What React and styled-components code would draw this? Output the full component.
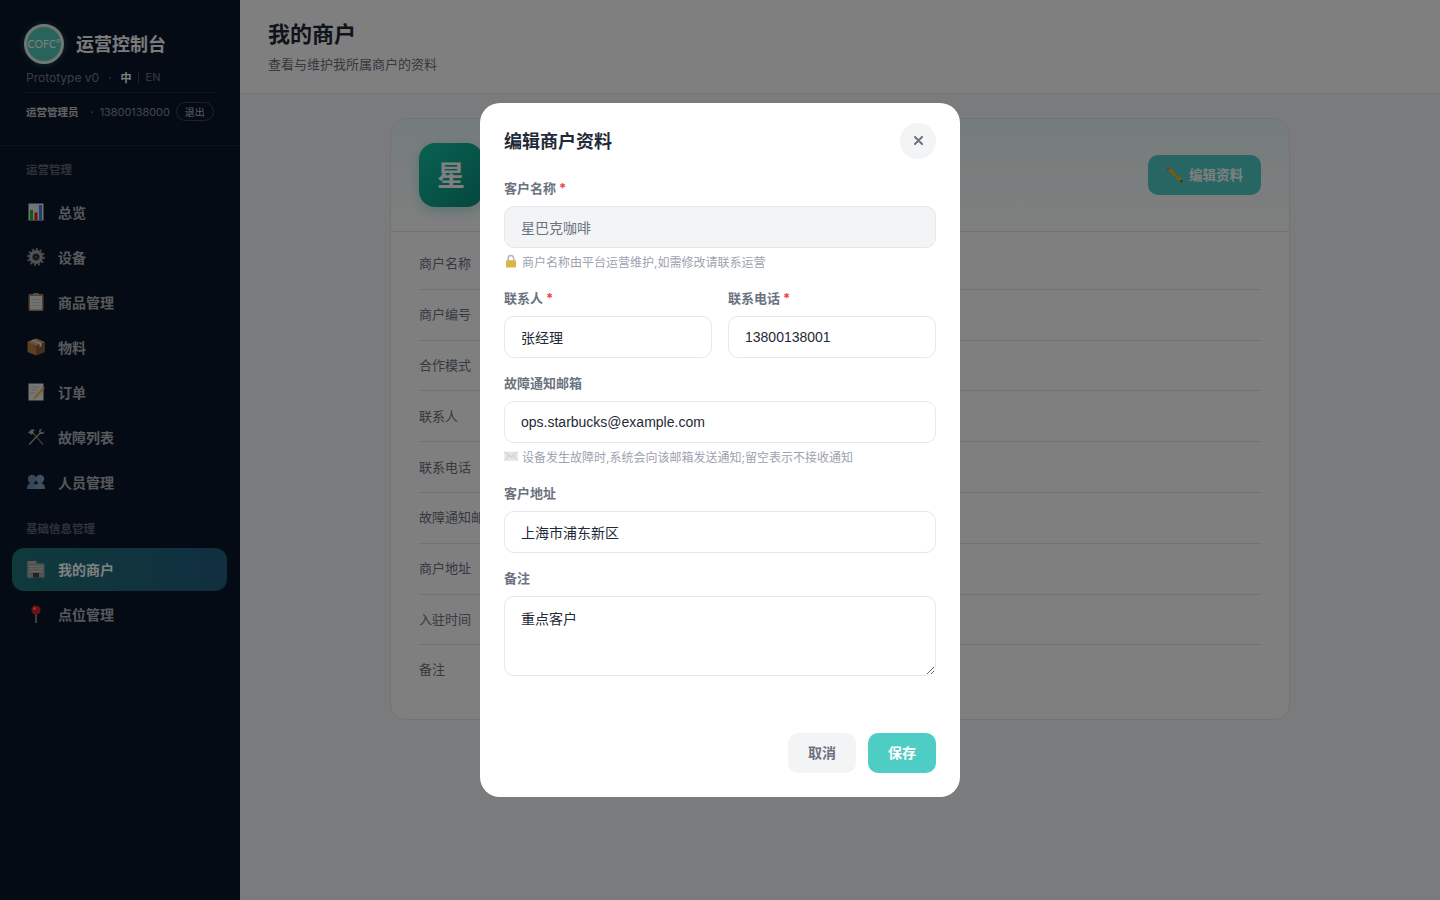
import React from "react";
import styled, { createGlobalStyle } from "styled-components";

const GlobalStyle = createGlobalStyle`
  html, body { margin: 0; padding: 0; height: 100%; }
  body {
    font-family: "Inter", "Noto Sans CJK SC", sans-serif;
    background: #f5f6f8;
    color: #1f2937;
    overflow: hidden;
  }
  * { box-sizing: border-box; }
`;

const Layout = styled.div`
  display: flex;
  width: 100%;
  height: 100vh;
`;

const Sidebar = styled.aside`
  width: 240px;
  flex-shrink: 0;
  background: #0a1628;
  display: flex;
  flex-direction: column;
`;

const Brand = styled.div`
  padding: 24px 24px 0;
  height: 146px;
  border-bottom: 1px solid rgba(255, 255, 255, 0.06);
`;

const BrandRow = styled.div`
  display: flex;
  align-items: center;
  gap: 12px;
  height: 40px;
`;

const LogoBadge = styled.div`
  width: 40px;
  height: 40px;
  border-radius: 50%;
  background: #52c8b8;
  border: 3px solid #e2ecea;
  box-shadow: 0 0 6px rgba(78, 205, 196, 0.35);
  color: #fff;
  font-family: "Lato", sans-serif;
  font-size: 10.5px;
  letter-spacing: 0.1px;
  display: flex;
  align-items: center;
  justify-content: center;
`;

const BrandName = styled.div`
  font-size: 18px;
  font-weight: 700;
  color: #f3f4f6;
  padding-bottom: 2px;
`;

const MetaRow = styled.div`
  display: flex;
  align-items: center;
  height: 20px;
  margin: 3px 0 0 2px;
  font-size: 12px;
  color: rgba(255, 255, 255, 0.45);
`;

const Dot = styled.span`
  margin: 0 9px;
`;

const Lang = styled.span`
  font-size: 11px;
  color: ${(p) => (p.$active ? "#fff" : "rgba(255,255,255,0.4)")};
  font-weight: ${(p) => (p.$active ? 700 : 400)};
`;

const LangBar = styled.span`
  width: 1px;
  height: 11px;
  background: rgba(255, 255, 255, 0.2);
  margin: 0 7px 0 6px;
`;

const UserRow = styled.div`
  display: flex;
  align-items: center;
  margin: 5px 2px 0 2px;
  padding-top: 10px;
  font-size: 10.9px;
  white-space: nowrap;
  color: rgba(255, 255, 255, 0.5);
  position: relative;
  &::before {
    content: "";
    position: absolute;
    left: -2px;
    right: -1px;
    top: 0;
    height: 1px;
    background: rgba(255, 255, 255, 0.08);
  }
`;

const UserName = styled.span`
  color: rgba(255, 255, 255, 0.75);
  font-weight: 600;
  font-size: 10.5px;
  margin-right: 12px;
  padding-bottom: 1px;
`;

const UserDot = styled.span`
  margin-right: 6px;
`;

const LogoutBtn = styled.button`
  margin-left: 6px;
  height: 19px;
  width: 38px;
  flex-shrink: 0;
  padding: 0;
  border: 1px solid rgba(255, 255, 255, 0.2);
  border-radius: 10px;
  background: transparent;
  color: rgba(255, 255, 255, 0.7);
  font-family: inherit;
  font-size: 10px;
`;

const SectionLabel = styled.div`
  font-size: 11.5px;
  font-weight: 600;
  color: rgba(255, 255, 255, 0.35);
  padding-left: 26px;
  height: 16px;
  line-height: 16px;
  margin: ${(p) => p.$margin};
`;

const NavList = styled.nav`
  display: flex;
  flex-direction: column;
  gap: 2px;
  margin: 0 13px 0 12px;
`;

const NavItem = styled.div`
  display: flex;
  align-items: center;
  gap: 13px;
  height: 43px;
  padding: 0 0 1px 15px;
  border-radius: 12px;
  font-size: 14px;
  font-weight: 600;
  color: ${(p) => (p.$active ? "#fff" : "rgba(255,255,255,0.68)")};
  background: ${(p) =>
    p.$active ? "linear-gradient(90deg, #1f7478, #215e80)" : "transparent"};
`;

const Main = styled.main`
  flex: 1;
  display: flex;
  flex-direction: column;
`;

const PageHeader = styled.header`
  height: 94px;
  padding: 20px 28px 0;
  background: #fff;
  border-bottom: 1px solid #e5e7eb;
`;

const PageTitle = styled.h1`
  margin: 0;
  font-size: 22px;
  line-height: 28px;
  font-weight: 700;
  color: #1f2937;
`;

const PageSub = styled.p`
  margin: 7px 0 0;
  font-size: 13px;
  line-height: 18px;
  color: #6b7280;
`;

const Content = styled.div`
  padding: 24px 0;
  display: flex;
  justify-content: center;
`;

const Card = styled.section`
  width: 900px;
  height: 602px;
  background: #fff;
  border: 1px solid #e5e7eb;
  border-radius: 16px;
  overflow: hidden;
`;

const CardHead = styled.div`
  height: 113px;
  padding: 24px 28px;
  display: flex;
  align-items: flex-start;
  justify-content: space-between;
  border-bottom: 1px solid #e5e7eb;
  background: linear-gradient(180deg, rgba(78, 205, 196, 0.12), #fff);
`;

const Avatar = styled.div`
  width: 64px;
  height: 64px;
  border-radius: 16px;
  background: linear-gradient(135deg, #14c4a6, #0a8c7a);
  box-shadow: 0 4px 12px rgba(16, 176, 154, 0.3);
  color: #fff;
  font-size: 28px;
  font-weight: 700;
  padding-bottom: 2px;
  display: flex;
  align-items: center;
  justify-content: center;
`;

const EditBtn = styled.button`
  margin-top: 12px;
  width: 113px;
  height: 40px;
  border: 0;
  border-radius: 10px;
  padding: 0 1px 3px 0;
  background: #4ecdc4;
  color: #fff;
  font-family: inherit;
  font-size: 13.5px;
  font-weight: 600;
  display: flex;
  align-items: center;
  justify-content: center;
  gap: 6px;
`;

const InfoList = styled.div`
  padding: 7px 28px 0;
`;

const InfoRow = styled.div`
  height: 50.8px;
  padding-bottom: ${(p) => (p.$last ? "4px" : "2px")};
  display: flex;
  align-items: center;
  font-size: 13px;
  color: #6b7280;
  border-bottom: ${(p) => (p.$last ? "0" : "1px solid #e5e7eb")};
`;

const InfoLabel = styled.span`
  width: 120px;
  flex-shrink: 0;
`;

const Overlay = styled.div`
  position: fixed;
  inset: 0;
  background: rgba(0, 0, 0, 0.5);
  display: flex;
  align-items: center;
  justify-content: center;
`;

const Modal = styled.div`
  width: 480px;
  height: 694px;
  background: #fff;
  border-radius: 20px;
  padding: 20px 24px 24px;
  display: flex;
  flex-direction: column;
`;

const ModalHead = styled.div`
  display: flex;
  align-items: center;
  justify-content: space-between;
  height: 36px;
  margin-bottom: 21px;
`;

const ModalTitle = styled.h2`
  margin: 0 0 3px;
  font-size: 18px;
  font-weight: 700;
  color: #1f2937;
`;

const CloseBtn = styled.button`
  width: 36px;
  height: 36px;
  padding: 0 0 1px;
  border: 0;
  border-radius: 50%;
  background: #f3f4f6;
  color: #6b7280;
  display: flex;
  align-items: center;
  justify-content: center;
`;

const Field = styled.div`
  margin-bottom: ${(p) => p.$gap || "17px"};
  min-width: 0;
`;

const FieldGrid = styled.div`
  display: grid;
  grid-template-columns: 1fr 1fr;
  gap: 16px;
`;

const Label = styled.label`
  display: block;
  height: 17px;
  line-height: 17px;
  margin-bottom: 9px;
  font-size: 13px;
  font-weight: 600;
  color: #6b7280;
`;

const Required = styled.span`
  color: #ef4444;
  font-weight: 700;
  margin-left: 3px;
`;

const TextInput = styled.input`
  display: block;
  width: 100%;
  height: 42px;
  padding: 0 16px 1px;
  border: 1px solid #e5e7eb;
  border-radius: 10px;
  background: ${(p) => (p.disabled ? "#f3f4f6" : "#fff")};
  color: ${(p) => (p.disabled ? "#6b7280" : "#1f2937")};
  font-family: "Liberation Sans", "Noto Sans CJK SC", sans-serif;
  font-size: 14px;
  outline: none;
  opacity: 1;
`;

const TextArea = styled.textarea`
  display: block;
  width: 100%;
  height: 80px;
  padding: 12px 16px;
  border: 1px solid #e5e7eb;
  border-radius: 10px;
  color: #1f2937;
  font-family: "Liberation Sans", "Noto Sans CJK SC", sans-serif;
  font-size: 14px;
  line-height: 20px;
  outline: none;
`;

const Hint = styled.div`
  display: flex;
  align-items: center;
  gap: 4px;
  height: 16px;
  margin-top: 5px;
  font-size: 12px;
  color: #9ca3af;
`;

const ModalFoot = styled.div`
  margin-top: auto;
  display: flex;
  justify-content: flex-end;
  gap: 12px;
`;

const FootBtn = styled.button`
  width: 68px;
  height: 40px;
  border: 0;
  border-radius: 10px;
  padding: 0 0 2px;
  background: ${(p) => (p.$primary ? "#4ecdc4" : "#f3f4f6")};
  color: ${(p) => (p.$primary ? "#fff" : "#6b7280")};
  font-family: inherit;
  font-size: 14px;
  font-weight: 600;
`;

const Glyph = ({ size = 18, children }) => (
  <svg width={size} height={size} viewBox="0 0 18 18" style={{ flexShrink: 0 }}>
    {children}
  </svg>
);

const ChartIcon = () => (
  <Glyph>
    <rect x="1.5" y="0.5" width="15" height="17" fill="#e8e8e8" />
    <rect x="3" y="7" width="3" height="10" fill="#22b33a" />
    <rect x="7.5" y="9.5" width="3" height="7.5" fill="#e01f1f" />
    <rect x="12" y="2" width="3" height="15" fill="#3b82e8" />
  </Glyph>
);

const GearIcon = () => (
  <Glyph>
    <circle cx="9" cy="9" r="7.9" fill="none" stroke="#8f8f8f" strokeWidth="2" strokeDasharray="2.1 2" />
    <circle cx="9" cy="9" r="5.2" fill="none" stroke="#a2a2a2" strokeWidth="3.4" />
    <circle cx="9" cy="9" r="3.4" fill="none" stroke="#6c6c6c" strokeWidth="1" />
    <circle cx="9" cy="9" r="1.6" fill="#5a5a5a" />
  </Glyph>
);

const ClipboardIcon = () => (
  <Glyph>
    <rect x="1.5" y="1" width="15" height="17" rx="1.5" fill="#a5805a" />
    <rect x="3" y="3" width="12" height="13.5" fill="#e2e2e2" />
    <rect x="6" y="0" width="6" height="3" rx="1" fill="#9a9a9a" />
    <path d="M4.5 6.5h9M4.5 9.5h9M4.5 12.5h9" stroke="#c8c8c8" strokeWidth="1" />
  </Glyph>
);

const BoxIcon = () => (
  <Glyph>
    <path d="M9 0.5 17.5 4v10L9 17.5.5 14V4z" fill="#b5804a" />
    <path d="M9 7.5 17.5 4v10L9 17.5z" fill="#8f5f33" />
    <path d="M9 0.5 17.5 4 9 7.5.5 4z" fill="#d2a06c" />
    <path d="M4 2.6 12.5 6v3l2-.8V5.2L6 1.8z" fill="#e9e2d4" />
  </Glyph>
);

const MemoIcon = () => (
  <Glyph>
    <rect x="1.5" y="0.5" width="15" height="17" fill="#ececec" />
    <path d="M3.5 4h9M3.5 7h7M3.5 10h5" stroke="#bdbdbd" strokeWidth="1" />
    <path d="M15.8 4.5 7.6 13.4l-2.2 3 3.4-1.4 8.4-8.9z" fill="#f0b429" />
    <path d="M15.8 4.5l1.4 1.6 1-1.1-1.4-1.6z" fill="#e0607a" />
  </Glyph>
);

const ToolsIcon = () => (
  <Glyph>
    <path d="M4.8 3.6 15.6 16" stroke="#8a6a48" strokeWidth="1.5" strokeLinecap="round" />
    <path d="M1 4.4 5 1l3.4 1.2-2.2 1 .2 2-1.8 1.6z" fill="#a8a8a8" />
    <path d="M13.6 4.6 2.6 16" stroke="#a0a0a0" strokeWidth="1.5" strokeLinecap="round" />
    <path d="M12.6 1.6a2.8 2.8 0 0 0 0 3.4l.6.6a2.8 2.8 0 0 0 3.4-.2c.5-.7.7-1.4.5-2.2l-1.7 1.4-1.5-.4-.3-1.4 1.5-1.6c-.9-.3-1.8-.2-2.5.4z" fill="#b0b0b0" />
  </Glyph>
);

const PeopleIcon = () => (
  <Glyph>
    <circle cx="5" cy="6" r="4.2" fill="#6f8fb5" />
    <path d="M0 16c0-4 1.8-6 5-6s5 2 5 6z" fill="#6f8fb5" />
    <circle cx="13" cy="6" r="4.2" fill="#7f9cc0" />
    <path d="M8 16c0-4 1.8-6 5-6s5 2 5 6z" fill="#7f9cc0" />
  </Glyph>
);

const BuildingIcon = () => (
  <Glyph>
    <rect x="0.5" y="1" width="9" height="16.5" fill="#b7b7b7" />
    <rect x="0.5" y="3.5" width="17" height="14" fill="#a4a4a4" />
    <path d="M2 6.5h14M2 9h14M2 11.5h14" stroke="#d2d2d2" strokeWidth="1" />
    <rect x="6" y="13" width="6" height="4.5" fill="#444" />
  </Glyph>
);

const PinIcon = () => (
  <Glyph>
    <path d="M9 8v10" stroke="#a8a8a8" strokeWidth="1.4" />
    <circle cx="9" cy="5" r="4.6" fill="#e0202c" />
    <circle cx="7.6" cy="3.6" r="1.3" fill="#f28a8a" />
  </Glyph>
);

const PencilIcon = () => (
  <Glyph>
    <path d="M1.5 4 3.8 1.8l13 13 .6 2.4-2.4-.6z" fill="#f2b90f" />
    <path d="M1.5 4 3.8 1.8 5.4 3.4 3.1 5.6z" fill="#e85a8a" />
    <path d="M15 16.6l1.8-1.8.6 2.4z" fill="#333" />
  </Glyph>
);

const LockIcon = () => (
  <Glyph size={14}>
    <path d="M5.5 9V5.5a3.5 3.5 0 0 1 7 0V9" fill="none" stroke="#b5b5b5" strokeWidth="2" />
    <rect x="2.5" y="8" width="13" height="9.5" rx="1.5" fill="#d9b64a" />
  </Glyph>
);

const MailIcon = () => (
  <Glyph size={14}>
    <rect x="0.5" y="3.5" width="17" height="11.5" fill="#e3e3e3" />
    <path d="M.5 3.5 9 10l8.5-6.5M.5 15 7 8.5M17.5 15 11 8.5" fill="none" stroke="#c6c6c6" strokeWidth="1" />
  </Glyph>
);

const OPS_NAV = [
  { label: "总览", icon: <ChartIcon /> },
  { label: "设备", icon: <GearIcon /> },
  { label: "商品管理", icon: <ClipboardIcon /> },
  { label: "物料", icon: <BoxIcon /> },
  { label: "订单", icon: <MemoIcon /> },
  { label: "故障列表", icon: <ToolsIcon /> },
  { label: "人员管理", icon: <PeopleIcon /> },
];

const BASE_NAV = [
  { label: "我的商户", icon: <BuildingIcon />, active: true },
  { label: "点位管理", icon: <PinIcon /> },
];

const INFO_ROWS = [
  "商户名称",
  "商户编号",
  "合作模式",
  "联系人",
  "联系电话",
  "故障通知邮箱",
  "商户地址",
  "入驻时间",
  "备注",
];

const App = () => {
  return (
    <>
      <GlobalStyle />
      <Layout>
        <Sidebar>
          <Brand>
            <BrandRow>
              <LogoBadge>COFC°</LogoBadge>
              <BrandName>运营控制台</BrandName>
            </BrandRow>
            <MetaRow>
              Prototype v0
              <Dot>·</Dot>
              <Lang $active>中</Lang>
              <LangBar />
              <Lang>EN</Lang>
            </MetaRow>
            <UserRow>
              <UserName>运营管理员</UserName>
              <UserDot>·</UserDot>13800138000
              <LogoutBtn>退出</LogoutBtn>
            </UserRow>
          </Brand>
          <SectionLabel $margin="16px 0 13px">运营管理</SectionLabel>
          <NavList>
            {OPS_NAV.map((item) => (
              <NavItem key={item.label}>
                {item.icon}
                {item.label}
              </NavItem>
            ))}
          </NavList>
          <SectionLabel $margin="17px 0 11px">基础信息管理</SectionLabel>
          <NavList>
            {BASE_NAV.map((item) => (
              <NavItem key={item.label} $active={item.active}>
                {item.icon}
                {item.label}
              </NavItem>
            ))}
          </NavList>
        </Sidebar>
        <Main>
          <PageHeader>
            <PageTitle>我的商户</PageTitle>
            <PageSub>查看与维护我所属商户的资料</PageSub>
          </PageHeader>
          <Content>
            <Card>
              <CardHead>
                <Avatar>星</Avatar>
                <EditBtn>
                  <PencilIcon />
                  编辑资料
                </EditBtn>
              </CardHead>
              <InfoList>
                {INFO_ROWS.map((label, i) => (
                  <InfoRow key={label} $last={i === INFO_ROWS.length - 1}>
                    <InfoLabel>{label}</InfoLabel>
                  </InfoRow>
                ))}
              </InfoList>
            </Card>
          </Content>
        </Main>
      </Layout>
      <Overlay>
        <Modal>
          <ModalHead>
            <ModalTitle>编辑商户资料</ModalTitle>
            <CloseBtn>
              <svg width="9" height="9" viewBox="0 0 9 9">
                <path d="M1 1l7 7M8 1l-7 7" stroke="currentColor" strokeWidth="2" strokeLinecap="round" />
              </svg>
            </CloseBtn>
          </ModalHead>
          <Field $gap="21px">
            <Label>
              客户名称<Required>*</Required>
            </Label>
            <TextInput disabled defaultValue="星巴克咖啡" />
            <Hint>
              <LockIcon />
              商户名称由平台运营维护,如需修改请联系运营
            </Hint>
          </Field>
          <FieldGrid>
            <Field>
              <Label>
                联系人<Required>*</Required>
              </Label>
              <TextInput defaultValue="张经理" />
            </Field>
            <Field>
              <Label>
                联系电话<Required>*</Required>
              </Label>
              <TextInput defaultValue="13800138001" />
            </Field>
          </FieldGrid>
          <Field $gap="21px">
            <Label>故障通知邮箱</Label>
            <TextInput defaultValue="ops.starbucks@example.com" />
            <Hint>
              <MailIcon />
              设备发生故障时,系统会向该邮箱发送通知;留空表示不接收通知
            </Hint>
          </Field>
          <Field>
            <Label>客户地址</Label>
            <TextInput defaultValue="上海市浦东新区" />
          </Field>
          <Field $gap="0">
            <Label>备注</Label>
            <TextArea defaultValue="重点客户" />
          </Field>
          <ModalFoot>
            <FootBtn>取消</FootBtn>
            <FootBtn $primary>保存</FootBtn>
          </ModalFoot>
        </Modal>
      </Overlay>
    </>
  );
};

export default App;
